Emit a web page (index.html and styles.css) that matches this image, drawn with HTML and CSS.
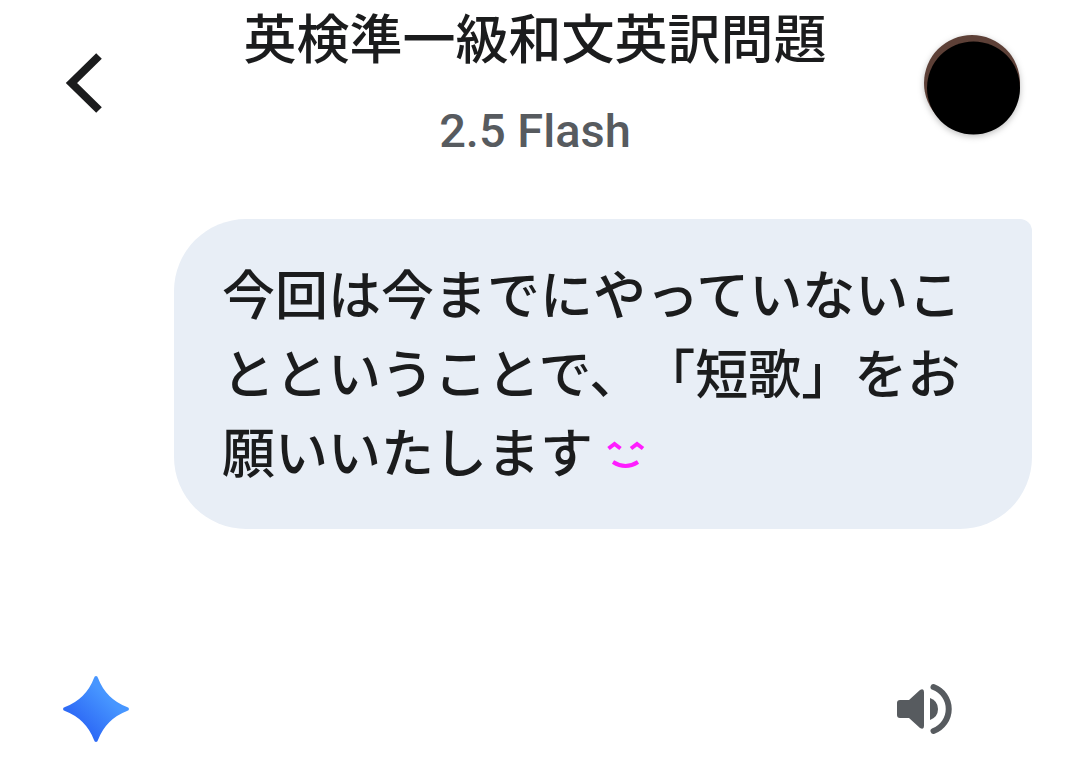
FILE: index.html
```html
<!DOCTYPE html>
<html lang="ja">
<head>
    <meta charset="UTF-8">
    <meta name="viewport" content="width=device-width, initial-scale=1.0">
    <title>英検準一級和文英訳問題</title>
    <link rel="stylesheet" href="styles.css">
</head>
<body>
    <header class="top-bar">
        <button class="icon-btn back" aria-label="戻る">
            <svg width="36" height="60" viewBox="0 0 36 60">
                <path d="M33 3 L5.5 30 L33 57" fill="none" stroke="#1b1c1d" stroke-width="8"/>
            </svg>
        </button>
        <div class="heading">
            <h1>英検準一級和文英訳問題</h1>
            <p>2.5 Flash</p>
        </div>
        <button class="icon-btn avatar" aria-label="アカウント">
            <svg width="96" height="96" viewBox="0 0 96 96">
                <circle cx="48" cy="48" r="48" fill="#5d4037"/>
                <circle cx="49.5" cy="53" r="46.5" fill="#000"/>
            </svg>
        </button>
    </header>

    <main class="chat">
        <div class="bubble">今回は今までにやっていないことということで、「短歌」をお願いいたします<svg class="smile" width="38" height="32" viewBox="0 0 38 32" role="img" aria-label="笑顔">
                <g fill="none" stroke="#ff1cff" stroke-width="4">
                    <path d="M1.5 7.5 L7.5 3 L13.5 7.5"/>
                    <path d="M24 7.5 L30 3 L36 7.5"/>
                    <path d="M6 21 Q18.5 29 31 21"/>
                </g>
            </svg></div>
    </main>

    <div class="reply">
        <svg width="66" height="66" viewBox="0 0 66 66">
            <defs>
                <linearGradient id="spark" x1="0.25" y1="0.7" x2="0.65" y2="0.3">
                    <stop offset="0" stop-color="#2e6bf6"/>
                    <stop offset="1" stop-color="#4796ff"/>
                </linearGradient>
            </defs>
            <path d="M33 0 Q34.5 0 35 2 Q43 23 64 31 Q66 31.5 66 33 Q66 34.5 64 35 Q43 43 35 64 Q34.5 66 33 66 Q31.5 66 31 64 Q23 43 2 35 Q0 34.5 0 33 Q0 31.5 2 31 Q23 23 31 2 Q31.5 0 33 0 Z" fill="url(#spark)"/>
        </svg>
        <button class="icon-btn" aria-label="読み上げ">
            <svg width="54" height="50" viewBox="0 0 54 50">
                <path d="M3 16 H12 L23 6 Q27 4 27 8 V42 Q27 46 23 44 L12 34 H3 Q0 34 0 31 V19 Q0 16 3 16 Z" fill="#575b5f"/>
                <path d="M33 14 Q41 17 41 25 Q41 33 33 36 Z" fill="#575b5f"/>
                <path d="M36.5 3 A23.5 23.5 0 0 1 36.5 47" fill="none" stroke="#575b5f" stroke-width="6" stroke-linecap="round"/>
            </svg>
        </button>
    </div>
</body>
</html>
```
FILE: styles.css
```css
body {
    margin: 0;
    background: #fff;
    color: #1b1c1d;
    font-family: "Noto Sans CJK JP", sans-serif;
    font-weight: 500;
    text-spacing-trim: space-all;
}

.icon-btn {
    padding: 0;
    border: none;
    background: none;
    cursor: pointer;
}

svg {
    display: block;
    overflow: visible;
}

.top-bar {
    display: grid;
    grid-template-columns: 96px 1fr 96px;
    align-items: center;
    padding: 0 60px 0 50px;
}

.back {
    padding-left: 16px;
}

.avatar {
    border-radius: 50%;
    filter: drop-shadow(0 2px 3px rgba(0, 0, 0, 0.25));
}

.heading {
    text-align: center;
}

h1 {
    margin: 0 0 24px;
    font-size: 53px;
    font-weight: 500;
    line-height: 72px;
}

.heading p {
    margin: 0;
    color: #575b5f;
    font-family: Roboto, sans-serif;
    font-size: 47px;
    line-height: 70px;
}

.chat {
    padding: 53px 48px 0 174px;
}

.bubble {
    padding: 34px 48px 39px;
    border-radius: 72px 12px 72px 72px;
    background: #e8eef6;
    font-size: 53px;
    line-height: 79px;
}

.smile {
    display: inline-block;
    margin-left: 14px;
}

.reply {
    display: flex;
    align-items: center;
    justify-content: space-between;
    padding: 147px 129px 20px 63px;
}
```
